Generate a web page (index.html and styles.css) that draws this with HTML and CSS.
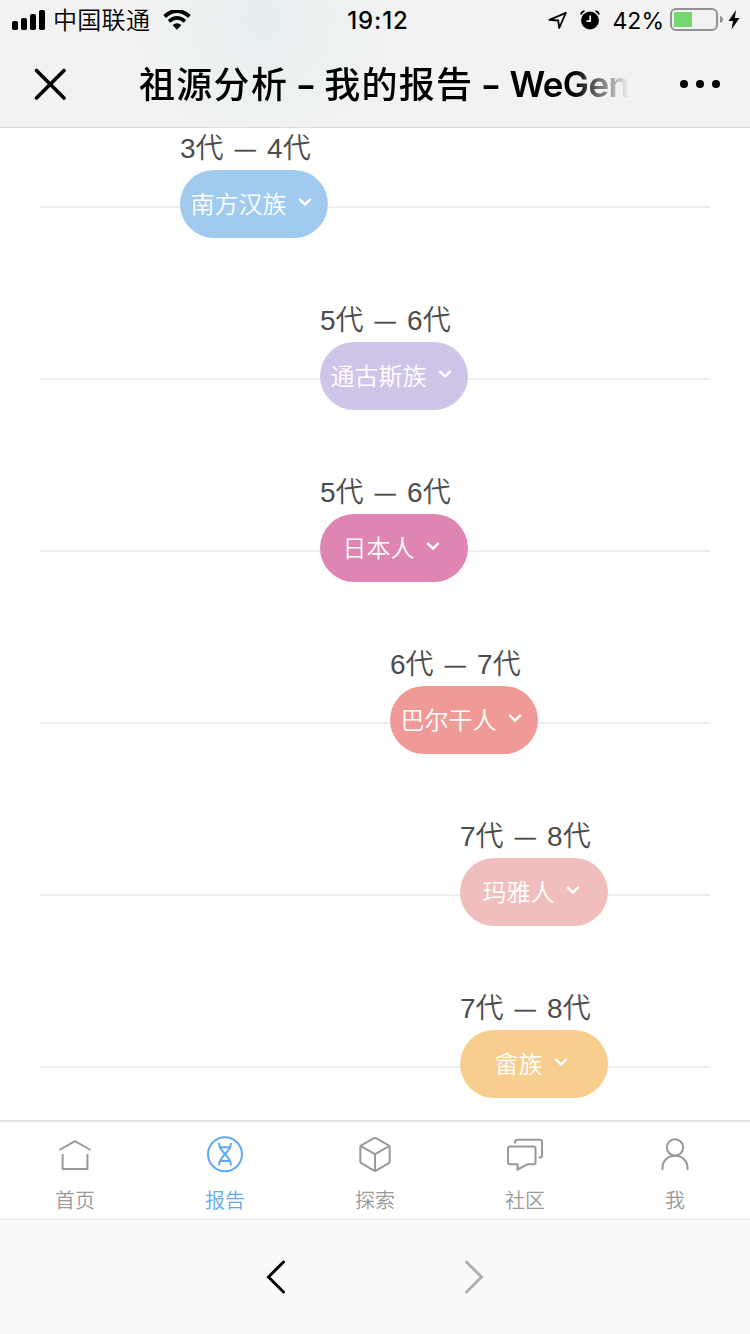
FILE: index.html
```html
<!DOCTYPE html>
<html lang="zh-CN">
<head>
    <meta charset="UTF-8">
    <meta name="viewport" content="width=device-width, initial-scale=1.0">
    <title>祖源分析 - 我的报告 - WeGene</title>
    <link rel="stylesheet" href="styles.css">
</head>
<body>
    <header class="header">
        <div class="status">
            <div class="status-left">
                <svg width="34" height="20" viewBox="0 0 34 20">
                    <rect x="0" y="11" width="6" height="9" rx="1.8"/>
                    <rect x="9" y="8" width="6" height="12" rx="1.8"/>
                    <rect x="18" y="4" width="6" height="16" rx="1.8"/>
                    <rect x="27" y="0" width="6" height="20" rx="1.8"/>
                </svg>
                <span class="carrier">中国联通</span>
                <svg class="wifi" width="28" height="20" viewBox="0 0 28 20">
                    <path d="M1.6 6.4Q14-4.400 26.400 6.400" fill="none" stroke="#000" stroke-width="4"/>
                    <path d="M6 11.300Q14 4.300 22 11.300" fill="none" stroke="#000" stroke-width="3.600"/>
                    <path d="M9.600 15Q14 11.600 18.400 15L14 19.700Z"/>
                </svg>
            </div>
            <span class="time">19:12</span>
            <div class="status-right">
                <svg class="locate" width="20" height="20" viewBox="0 0 20 20">
                    <path d="M1.400 9.800L17.800 2.800L11.200 18L10.200 10.500Z" fill="none" stroke="#000" stroke-width="1.800" stroke-linejoin="round"/>
                </svg>
                <svg class="alarm" width="20" height="20" viewBox="0 0 20 20">
                    <circle cx="10" cy="10.500" r="8.900"/>
                    <path d="M1 4.500Q1.500 1.500 4.500 1.200M19 4.500Q18.500 1.500 15.500 1.200" fill="none" stroke="#000" stroke-width="1.700"/>
                    <path d="M10.200 5.500V11.200H6.500" fill="none" stroke="#f2f2f2" stroke-width="1.700"/>
                </svg>
                <span class="percent">42%</span>
                <svg class="battery" width="54" height="24" viewBox="0 0 54 24">
                    <rect x="1" y="1" width="46" height="21" rx="5" fill="none" stroke="#929292" stroke-width="2"/>
                    <rect x="4" y="4" width="18" height="15" fill="#76d672"/>
                    <path d="M50 8Q53 9 53 11.500Q53 14 50 15Z" fill="#929292"/>
                </svg>
                <svg width="12" height="20" viewBox="0 0 12 20">
                    <path d="M8 0L.500 11H5L3.500 19.500L11.500 8H6.800Z"/>
                </svg>
            </div>
        </div>
        <div class="nav">
            <svg class="close" width="32" height="32" viewBox="0 0 32 32">
                <path d="M2.500 2.500L30 30M30 2.500L2.500 30" stroke="#000" stroke-width="3.600" stroke-linecap="round"/>
            </svg>
            <div class="page-title"><span class="zh">祖源分析</span><span class="dash">-</span><span class="zh">我的报告</span><span class="dash">-</span><span class="brand">WeGen</span></div>
            <svg class="more" width="40" height="8" viewBox="0 0 40 8">
                <circle cx="4" cy="4" r="4"/>
                <circle cx="20" cy="4" r="4"/>
                <circle cx="36" cy="4" r="4"/>
            </svg>
        </div>
    </header>

    <main class="timeline">
        <div class="row gen-3">
            <p class="range">3代<span class="to">—</span>4代</p>
            <div class="track"><div class="pill blue">南方汉族<svg class="arrow" viewBox="0 0 14 10"><path d="M1.300 1.800L7 7.500L12.700 1.800"/></svg></div></div>
        </div>
        <div class="row gen-5">
            <p class="range">5代<span class="to">—</span>6代</p>
            <div class="track"><div class="pill purple">通古斯族<svg class="arrow" viewBox="0 0 14 10"><path d="M1.300 1.800L7 7.500L12.700 1.800"/></svg></div></div>
        </div>
        <div class="row gen-5">
            <p class="range">5代<span class="to">—</span>6代</p>
            <div class="track"><div class="pill magenta">日本人<svg class="arrow" viewBox="0 0 14 10"><path d="M1.300 1.800L7 7.500L12.700 1.800"/></svg></div></div>
        </div>
        <div class="row gen-6">
            <p class="range">6代<span class="to">—</span>7代</p>
            <div class="track"><div class="pill red">巴尔干人<svg class="arrow" viewBox="0 0 14 10"><path d="M1.300 1.800L7 7.500L12.700 1.800"/></svg></div></div>
        </div>
        <div class="row gen-7">
            <p class="range">7代<span class="to">—</span>8代</p>
            <div class="track"><div class="pill pink">玛雅人<svg class="arrow" viewBox="0 0 14 10"><path d="M1.300 1.800L7 7.500L12.700 1.800"/></svg></div></div>
        </div>
        <div class="row gen-7">
            <p class="range">7代<span class="to">—</span>8代</p>
            <div class="track"><div class="pill orange">畲族<svg class="arrow" viewBox="0 0 14 10"><path d="M1.300 1.800L7 7.500L12.700 1.800"/></svg></div></div>
        </div>
    </main>

    <nav class="tabs">
        <a class="tab">
            <svg width="40" height="40" viewBox="0 0 40 40">
                <path d="M4.300 15L20 6.200L35.700 15M7.600 19V34H32.400V19"/>
            </svg>
            <span>首页</span>
        </a>
        <a class="tab active">
            <svg width="40" height="40" viewBox="0 0 40 40">
                <circle cx="20" cy="19.300" r="17"/>
                <path d="M14 8C14 18 26 20 26 30.500M26 8C26 18 14 20 14 30.500M14 12.300H26M14.500 26H25.500"/>
            </svg>
            <span>报告</span>
        </a>
        <a class="tab">
            <svg width="40" height="40" viewBox="0 0 40 40" stroke-linejoin="round">
                <path d="M19 3.200Q20 2.600 21 3.200L33.700 10.300Q34.700 10.900 34.700 12V26.500Q34.700 27.600 33.700 28.200L21 35.600Q20 36.200 19 35.600L6.300 28.200Q5.300 27.600 5.300 26.500V12Q5.300 10.900 6.300 10.300ZM5.800 11.200L20 19.200L34.200 11.200M20 19.200V35.500"/>
            </svg>
            <span>探索</span>
        </a>
        <a class="tab">
            <svg width="40" height="40" viewBox="0 0 40 40">
                <path d="M5 11.400H28.500Q30.500 11.400 30.500 13.400V27.300Q30.500 29.300 28.500 29.300H22.500L12.500 34.500V29.300H5Q3 29.300 3 27.300V13.400Q3 11.400 5 11.400ZM10 8.500V6.800Q10 4.800 12 4.800H35Q37 4.800 37 6.800V20.500Q37 22.500 35 22.500H33.500"/>
            </svg>
            <span>社区</span>
        </a>
        <a class="tab">
            <svg width="40" height="40" viewBox="0 0 40 40">
                <circle cx="20" cy="12.500" r="8.200"/>
                <path d="M7.500 35V33.500C7.500 26 12.500 20.700 20 20.700C27.500 20.700 32.500 26 32.500 33.500V35"/>
            </svg>
            <span>我</span>
        </a>
    </nav>

    <footer class="toolbar">
        <svg width="20" height="34" viewBox="0 0 20 34"><path d="M17.500 2L2.500 17L17.500 32" stroke="#000"/></svg>
        <svg width="20" height="34" viewBox="0 0 20 34"><path d="M2.500 2L17.500 17L2.500 32" stroke="#b0b0b2"/></svg>
    </footer>
</body>
</html>
```
FILE: styles.css
```css
* {
    box-sizing: border-box;
}
body {
    margin: 0;
    width: 750px;
    height: 1334px;
    overflow: hidden;
    display: flex;
    flex-direction: column;
    background: #fff;
    font-family: "Liberation Sans", "Noto Sans CJK SC", sans-serif;
}
svg {
    display: block;
    flex: none;
}
.header {
    height: 128px;
    flex: none;
    background: radial-gradient(circle at 262px 20px, #e7eff0 0, #f2f2f2 140px);
    border-bottom: 1px solid #d8d9da;
    color: #000;
    font-family: Inter, "Noto Sans CJK SC", sans-serif;
}
.status {
    height: 40px;
    display: grid;
    grid-template-columns: 1fr auto 1fr;
    align-items: center;
    padding: 0 10px 0 12px;
}
.status-left, .status-right {
    display: flex;
    align-items: center;
}
.status-right {
    justify-content: flex-end;
}
.carrier {
    font-size: 24px;
    line-height: 38px;
    padding-top: 2px;
    margin-left: 7px;
    letter-spacing: 0.3px;
    font-weight: 350;
}
.wifi {
    margin-left: 13px;
}
.time {
    font-size: 24px;
    font-weight: 500;
    letter-spacing: 0.9px;
    padding: 1px 0 0 4px;
}
.alarm {
    margin-left: 12px;
}
.percent {
    font-size: 23px;
    margin-left: 13px;
    padding-top: 1px;
}
.battery {
    margin-left: 6px;
}
.status-right svg:last-child {
    margin-left: 4px;
}
.nav {
    height: 87px;
    display: flex;
    align-items: center;
    padding: 0 30px 0 34px;
}
.page-title {
    width: 492px;
    margin-left: 73px;
    padding-top: 3px;
    display: flex;
    align-items: center;
    overflow: hidden;
    white-space: nowrap;
    font-size: 36px;
    line-height: 50px;
    font-weight: 600;
    -webkit-mask-image: linear-gradient(to right, #000 435px, transparent 490px);
    mask-image: linear-gradient(to right, #000 435px, transparent 490px);
}
.zh {
    flex: none;
    font-weight: 500;
    letter-spacing: 1.3px;
}
.dash {
    flex: none;
    width: 36px;
    text-align: center;
    transform: scaleX(1.25);
}
.brand {
    font-size: 35px;
    letter-spacing: -0.6px;
    padding-bottom: 2px;
}
.more {
    margin-left: 49px;
}
.timeline {
    height: 992px;
    flex: none;
    overflow: hidden;
    padding: 0 40px;
}
.row {
    height: 172px;
}
.gen-3 { --start: 140px; }
.gen-5 { --start: 280px; }
.gen-6 { --start: 350px; }
.gen-7 { --start: 420px; }
.range {
    margin: 0;
    padding: 1px 0 0 var(--start);
    height: 42px;
    line-height: 40px;
    font-size: 28px;
    font-weight: 350;
    color: #4c4c4c;
}
.to {
    display: inline-block;
    width: 43.5px;
    text-align: center;
    font-size: 21px;
    line-height: 20px;
    vertical-align: 2px;
    -webkit-text-stroke: 0.4px #4c4c4c;
}
.track {
    display: flex;
    align-items: center;
}
.track::before, .track::after {
    content: "";
    height: 2px;
    margin-top: 6px;
    background: #eee;
}
.track::before {
    width: var(--start);
}
.track::after {
    flex: 1;
}
.pill {
    width: 148px;
    height: 68px;
    border-radius: 34px;
    display: flex;
    align-items: center;
    justify-content: center;
    color: #fff;
    font-size: 24px;
    font-weight: 350;
    padding: 0 1px 4px 0;
}
.arrow {
    width: 14px;
    height: 10px;
    margin: 2px 5px 2px 11px;
    fill: none;
    stroke: #fff;
    stroke-width: 2.4;
}
.blue { background: #a0cbef; }
.purple { background: #cfc5e8; }
.magenta { background: #df85b4; }
.red { background: #f09a98; }
.pink { background: #f0bfbd; }
.orange { background: #f7ce8d; }
.tabs {
    height: 99px;
    flex: none;
    display: flex;
    border-top: 2px solid #e2e2e2;
}
.tab {
    flex: 1;
    display: flex;
    flex-direction: column;
    align-items: center;
    padding-top: 13px;
    color: #999;
    font-size: 20px;
    font-weight: 350;
    line-height: 30px;
}
.tab svg {
    fill: none;
    stroke: currentColor;
    stroke-width: 2;
    margin-bottom: 11px;
}
.active {
    color: #62aaf0;
}
.toolbar {
    flex: 1;
    display: flex;
    justify-content: center;
    align-items: center;
    gap: 178px;
    background: #fafafa;
    border-top: 1px solid #e4e4e4;
}
.toolbar path {
    fill: none;
    stroke-width: 3;
    stroke-linecap: round;
}
```
